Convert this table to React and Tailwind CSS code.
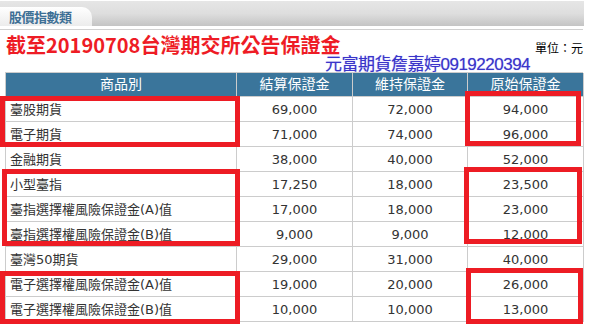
const rows = [
  ["臺股期貨", "69,000", "72,000", "94,000"],
  ["電子期貨", "71,000", "74,000", "96,000"],
  ["金融期貨", "38,000", "40,000", "52,000"],
  ["小型臺指", "17,250", "18,000", "23,500"],
  ["臺指選擇權風險保證金(A)值", "17,000", "18,000", "23,000"],
  ["臺指選擇權風險保證金(B)值", "9,000", "9,000", "12,000"],
  ["臺灣50期貨", "29,000", "31,000", "40,000"],
  ["電子選擇權風險保證金(A)值", "19,000", "20,000", "26,000"],
  ["電子選擇權風險保證金(B)值", "10,000", "10,000", "13,000"],
];

// red annotation boxes drawn over the table
const marks = [
  "left-0 top-[96px] w-[240px] h-[51px]",
  "left-[465px] top-[91px] w-[116px] h-[55px]",
  "left-[2px] top-[169px] w-[238px] h-[77px]",
  "left-[464px] top-[167px] w-[118px] h-[77px]",
  "left-0 top-[271px] w-[240px] h-[53px]",
  "left-[466px] top-[268px] w-[117px] h-[56px]",
];

const App = () => {
  return (
    <div className="relative w-[590px] h-[324px] overflow-hidden bg-white font-['DejaVu_Sans','Noto_Sans_CJK_TC',sans-serif]">

      {/* Tabs */}
      <div className="mt-px w-[584px] h-[25px] flex items-end bg-gradient-to-b from-[#e6e6e6] via-[#dedede] to-[#c4c4c4]">
        <div className="w-[92px] h-[19px] rounded-tr-[10px] bg-gradient-to-b from-[#ffffff] to-[#ececec] pl-[9px] flex items-center">
          <p className="text-[13px] font-bold text-[#3d6f95] leading-none tracking-[-0.5px] font-['Noto_Sans_CJK_TC',sans-serif]">股價指數類</p>
        </div>
      </div>
      <div className="mt-[3px] w-[583px] h-px bg-[#d0d0d0]"></div>

      {/* Title */}
      <div className="h-[42px] w-[583px] flex flex-col">
        <div className="h-[27px] flex justify-between items-end">
          <p className="pl-[6px] text-[20px] leading-[24px] font-bold text-[#ee1c25] font-['Noto_Sans_CJK_TC',sans-serif]">截至20190708台灣期交所公告保證金</p>
          <p className="text-[12px] leading-none pb-[3px] text-black font-['Noto_Sans_CJK_TC',sans-serif]">單位：元</p>
        </div>
        <p className="pl-[325px] text-[17px] leading-[15px] tracking-[-0.5px] text-[#3a34c9] [text-shadow:0_0_1px_#9a9af0] font-['Liberation_Sans','Noto_Sans_CJK_TC',sans-serif]">
          元富期貨詹嘉婷0919220394
        </p>
      </div>

      {/* Table */}
      <div className="ml-[5px] w-[578px] border-l border-t border-[#cccccc] text-[13px] leading-[15px] text-[#333]">
        <div className="grid grid-cols-[231px_116px_115px_116px] h-[24px] bg-[#3a759b] text-white text-[14px]">
          <div className="flex items-center justify-center border-r border-b border-[#cccccc]">商品別</div>
          <div className="flex items-center justify-center border-r border-b border-[#cccccc]">結算保證金</div>
          <div className="flex items-center justify-center border-r border-b border-[#cccccc]">維持保證金</div>
          <div className="flex items-center justify-center border-r border-b border-[#cccccc]">原始保證金</div>
        </div>
        {rows.map((r) => (
          <div key={r[0]} className="grid grid-cols-[231px_116px_115px_116px] h-[25px]">
            <div className="flex items-center pl-[4px] border-r border-b border-[#cccccc] whitespace-nowrap">{r[0]}</div>
            <div className="flex items-center justify-center border-r border-b border-[#cccccc]">{r[1]}</div>
            <div className="flex items-center justify-center border-r border-b border-[#cccccc]">{r[2]}</div>
            <div className="flex items-center justify-center border-r border-b border-[#cccccc]">{r[3]}</div>
          </div>
        ))}
      </div>

      {marks.map((m) => (
        <div key={m} className={`absolute border-[5px] border-[#ed1c24] ${m}`}></div>
      ))}
    </div>
  );
};

export default App;
